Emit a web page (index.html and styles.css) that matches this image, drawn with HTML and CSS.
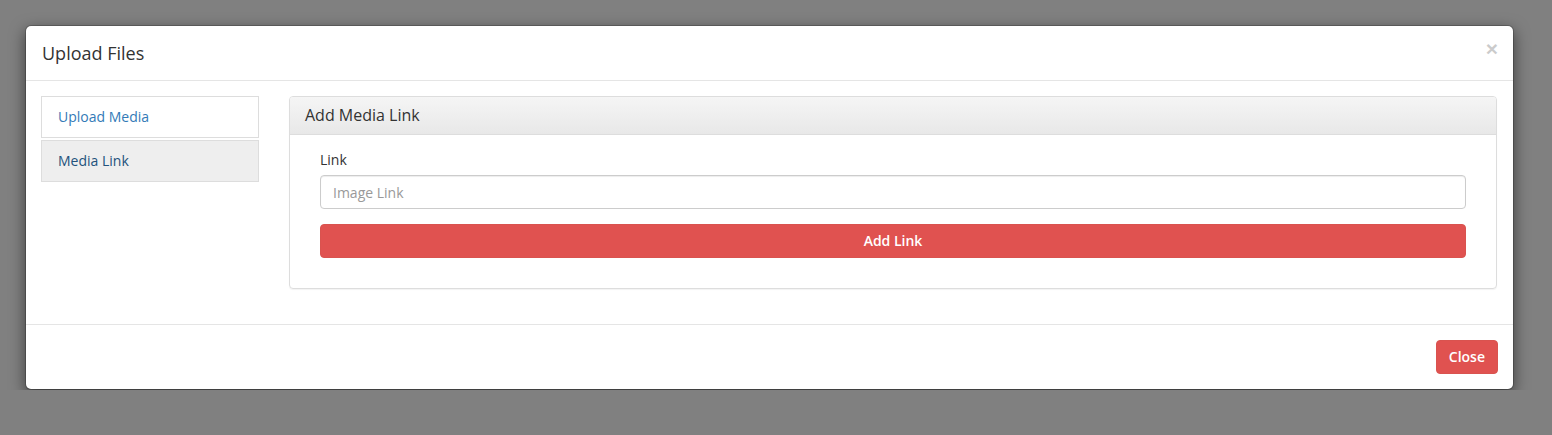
FILE: index.html
```html
<!DOCTYPE html>
<html lang="en">
<head>
    <meta charset="UTF-8">
    <meta name="viewport" content="width=device-width, initial-scale=1.0">
    <title>Upload Files</title>
    <link rel="stylesheet" href="styles.css">
</head>
<body>
    <div class="modal">
        <div class="modal-header">
            <h4 class="modal-title">Upload Files</h4>
            <button type="button" class="close">&times;</button>
        </div>
        <div class="modal-body">
            <div class="side">
                <a class="nav-item" href="#">Upload Media</a>
                <a class="nav-item active" href="#">Media Link</a>
            </div>
            <div class="main">
                <div class="panel">
                    <div class="panel-heading">Add Media Link</div>
                    <div class="panel-body">
                        <label for="link">Link</label>
                        <input type="text" id="link" placeholder="Image Link">
                        <button type="button" class="btn btn-block">Add Link</button>
                    </div>
                </div>
            </div>
        </div>
        <div class="modal-footer">
            <button type="button" class="btn">Close</button>
        </div>
    </div>
</body>
</html>
```

FILE: styles.css
```css
* {
    box-sizing: border-box;
}
body {
    margin: 0;
    background-color: #808080;
    font-family: "Open Sans", "Liberation Sans", sans-serif;
    font-size: 14px;
    line-height: 20px;
    color: #333;
    padding: 25px 0 0 25px;
}
.modal {
    width: 1489px;
    background: #fff;
    border: 1px solid rgba(0, 0, 0, 0.2);
    border-radius: 6px;
    box-shadow: 0 5px 15px rgba(0, 0, 0, 0.5);
    background-clip: padding-box;
}
.modal-header {
    display: flex;
    justify-content: space-between;
    align-items: flex-start;
    padding: 15px 15px 15px 16px;
    border-bottom: 1px solid #e5e5e5;
}
.modal-title {
    margin: 0;
    font-size: 18px;
    font-weight: 500;
    line-height: 24px;
}
.close {
    background: none;
    border: 0;
    padding: 0;
    margin-top: -3px;
    font-family: "Liberation Sans", sans-serif;
    font-size: 21px;
    font-weight: bold;
    line-height: 21px;
    color: #000;
    opacity: 0.2;
    cursor: pointer;
}
.modal-body {
    display: flex;
    padding: 15px 16px 35px 15px;
}
.side {
    width: 218px;
    display: flex;
    flex-direction: column;
    gap: 2px;
}
.nav-item {
    display: block;
    padding: 10px 16px;
    border: 1px solid #ddd;
    text-decoration: none;
    color: #337ab7;
}
.nav-item.active {
    background-color: #eee;
    color: #23527c;
}
.main {
    flex: 1;
    margin-left: 30px;
}
.panel {
    border: 1px solid #ddd;
    border-radius: 4px;
    box-shadow: 0 1px 1px rgba(0, 0, 0, 0.05);
}
.panel-heading {
    padding: 9px 15px 9px;
    font-size: 16px;
    line-height: 19px;
    color: #333;
    background-image: linear-gradient(to bottom, #f5f5f5 0, #e8e8e8 100%);
    border-bottom: 1px solid #ddd;
    border-radius: 3px 3px 0 0;
}
.panel-body {
    padding: 15px 30px 30px;
}
label {
    display: block;
    margin-bottom: 5px;
    font-weight: 500;
}
input {
    display: block;
    width: 100%;
    height: 34px;
    padding: 6px 12px;
    margin-bottom: 15px;
    font-family: inherit;
    font-size: 14px;
    color: #555;
    border: 1px solid #ccc;
    border-radius: 4px;
    box-shadow: inset 0 1px 1px rgba(0, 0, 0, 0.075);
}
input::placeholder {
    color: #999;
}
.btn {
    height: 34px;
    padding: 6px 12px;
    font-family: inherit;
    font-size: 14px;
    font-weight: 600;
    line-height: 20px;
    color: #fff;
    background-color: #e05250;
    border: 1px solid #d9534f;
    border-radius: 4px;
    cursor: pointer;
}
.btn-block {
    display: block;
    width: 100%;
}
.modal-footer {
    display: flex;
    justify-content: flex-end;
    padding: 15px;
    border-top: 1px solid #e5e5e5;
}
```
